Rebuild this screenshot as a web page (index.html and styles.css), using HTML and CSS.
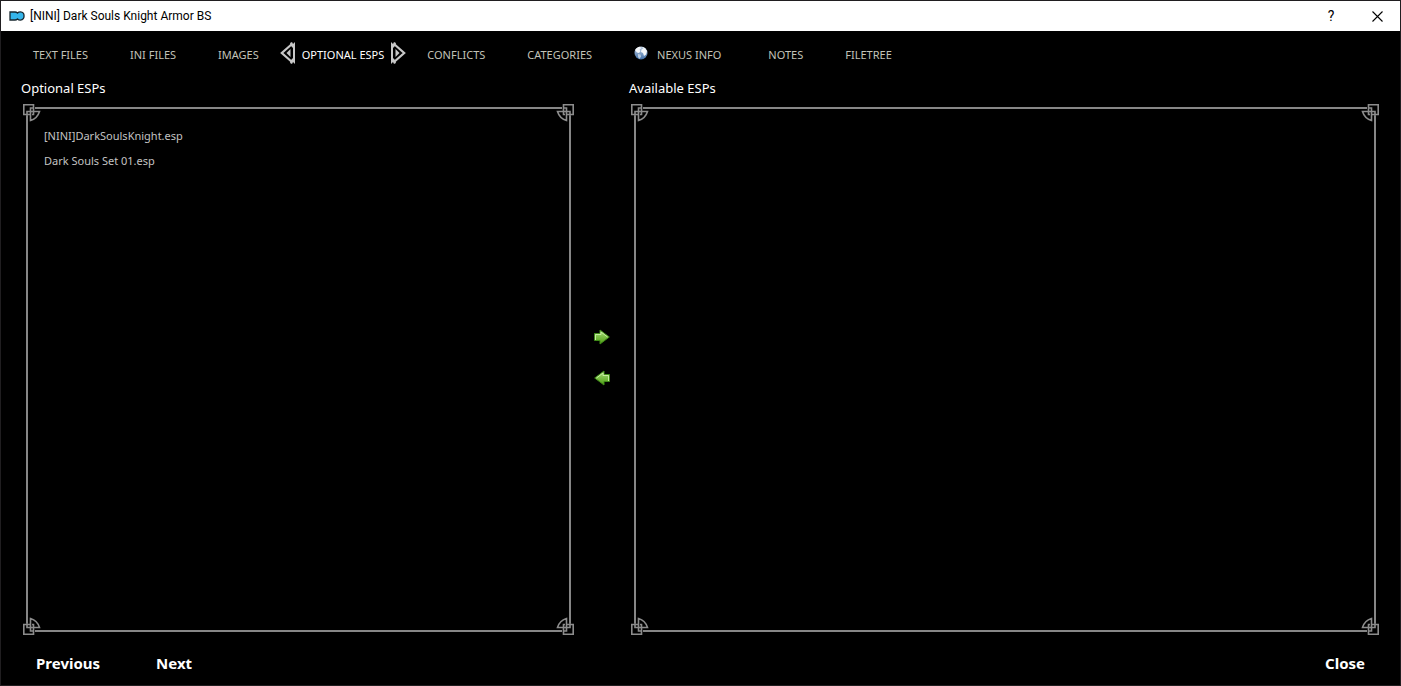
FILE: index.html
```html
<!DOCTYPE html>
<html lang="en">
<head>
  <meta charset="UTF-8" />
  <meta name="viewport" content="width=device-width, initial-scale=1.0" />
  <title>[NINI] Dark Souls Knight Armor BS</title>
  <link rel="stylesheet" href="styles.css">
</head>
<body>
  <svg class="defs" aria-hidden="true">
    <symbol id="corner" viewBox="0 0 18 18">
      <path d="M0 0h11v18H0zM11 0h7v11h-7z" fill="#000"/>
      <path d="M18 4H12M4 18V12" fill="none" stroke="#868686" stroke-width="2"/>
      <path d="M11 4H7.500v12.500c5-1.500 7.500-4 9-9H4V12M7 10.500H.800V.800h9.700v9.700H9" fill="none" stroke="#8c8c8c" stroke-width="1.600"/>
    </symbol>
    <symbol id="tab-mark" viewBox="0 0 16 22">
      <path d="M12 2L1.800 11 12 20" fill="none" stroke="#c8c8c8" stroke-width="2.200"/>
      <path d="M10 1l2-1 1 2 2-2v22l-2-2-1 2-2-1 1-3 2-2V6l-2-2zM10.500 7v8L6.500 11z" fill="#c8c8c8"/>
    </symbol>
    <linearGradient id="green" x1="0" y1="0" x2="0" y2="1">
      <stop offset="0" stop-color="#a9e07a"/>
      <stop offset="1" stop-color="#4d9d12"/>
    </linearGradient>
    <symbol id="arrow" viewBox="0 0 16 16">
      <path d="M.5 4.500h5.500V1L15.300 8 6 15v-3.500H.5z" fill="url(#green)" stroke="#3f8a18"/>
      <path d="M1.500 11V5.500H7V3L13.500 8" fill="none" stroke="#c5eda0"/>
    </symbol>
  </svg>

  <div class="window">
    <header class="titlebar">
      <svg class="app-icon" viewBox="0 0 16 10" aria-hidden="true">
        <path d="M1 1h5c1.500 0 2 .5 2.500 1C10 .5 13 .5 14.300 2.200c1 1.300 1 4.200 0 5.500C13 9.500 10 9.500 8.500 8 8 8.500 7.500 9 6 9H1z" fill="#35b5ea" stroke="#17272f" stroke-width="1.300"/>
      </svg>
      <h1>[NINI] Dark Souls Knight Armor BS</h1>
      <button type="button" class="title-button" aria-label="Help">?</button>
      <button type="button" class="title-button" aria-label="Close window">
        <svg class="cross" viewBox="0 0 11 11"><path d="M.5.5l10 10M10.500.5l-10 10" stroke="#000" stroke-width="1.100"/></svg>
      </button>
    </header>

    <nav class="tabs">
      <button type="button">TEXT FILES</button>
      <button type="button">INI FILES</button>
      <button type="button">IMAGES</button>
      <button type="button" class="active">
        <svg class="mark" aria-hidden="true"><use href="#tab-mark"/></svg>
        OPTIONAL ESPS
        <svg class="mark flip-x" aria-hidden="true"><use href="#tab-mark"/></svg>
      </button>
      <button type="button">CONFLICTS</button>
      <button type="button">CATEGORIES</button>
      <button type="button" class="with-icon">
        <svg class="globe" viewBox="0 0 14 14" aria-hidden="true">
          <defs>
            <linearGradient id="sea" x1="0" y1="0" x2="0" y2="1">
              <stop offset="0" stop-color="#c3d2e4"/>
              <stop offset="1" stop-color="#3f6ea8"/>
            </linearGradient>
          </defs>
          <circle cx="7" cy="7" r="6.500" fill="url(#sea)"/>
          <path d="M1 4c1-2 3-3.300 5-3.300l1 1.600-1.500 1.500 1 1.200-1.500 2L3 6.500zM8 1l3 1 2 3-1 3.500-2 1.500-1-3-2-1 .5-2.500 2-1z" fill="#f4f7fa"/>
          <path d="M4 8l2.500.5.5 2L5.500 13 4 11z" fill="#b9cbe0"/>
        </svg>
        NEXUS INFO
      </button>
      <button type="button">NOTES</button>
      <button type="button">FILETREE</button>
    </nav>

    <main class="panels">
      <section class="panel">
        <h2>Optional ESPs</h2>
        <div class="frame">
          <ul class="list">
            <li>[NINI]DarkSoulsKnight.esp</li>
            <li>Dark Souls Set 01.esp</li>
          </ul>
          <svg class="corner top left" aria-hidden="true"><use href="#corner"/></svg>
          <svg class="corner top right" aria-hidden="true"><use href="#corner"/></svg>
          <svg class="corner bottom left" aria-hidden="true"><use href="#corner"/></svg>
          <svg class="corner bottom right" aria-hidden="true"><use href="#corner"/></svg>
        </div>
      </section>

      <div class="movers">
        <button type="button" aria-label="Make available"><svg class="arrow"><use href="#arrow"/></svg></button>
        <button type="button" aria-label="Make optional"><svg class="arrow flip-x"><use href="#arrow"/></svg></button>
      </div>

      <section class="panel">
        <h2>Available ESPs</h2>
        <div class="frame">
          <ul class="list"></ul>
          <svg class="corner top left" aria-hidden="true"><use href="#corner"/></svg>
          <svg class="corner top right" aria-hidden="true"><use href="#corner"/></svg>
          <svg class="corner bottom left" aria-hidden="true"><use href="#corner"/></svg>
          <svg class="corner bottom right" aria-hidden="true"><use href="#corner"/></svg>
        </div>
      </section>
    </main>

    <footer class="actions">
      <button type="button">Previous</button>
      <button type="button">Next</button>
      <button type="button" class="close">Close</button>
    </footer>
  </div>
</body>
</html>
```

FILE: styles.css
```css
* {
  box-sizing: border-box;
}
body {
  margin: 0;
  background: #000;
  color: #fff;
  font-family: "Noto Sans", "Open Sans", sans-serif;
}
button {
  padding: 0;
  border: none;
  background: none;
  color: inherit;
  font: inherit;
  cursor: pointer;
}
svg {
  display: block;
  flex: none;
}
.defs {
  position: absolute;
  width: 0;
  height: 0;
}
.window {
  display: flex;
  flex-direction: column;
  min-height: 100vh;
  border: 1px solid #201e20;
}

/* title bar */
.titlebar {
  display: flex;
  align-items: center;
  height: 30px;
  padding-left: 8px;
  background: #fff;
  color: #000;
  font-family: Roboto, sans-serif;
}
.app-icon {
  width: 16px;
  height: 10px;
  margin-right: 5px;
}
.titlebar h1 {
  flex: 1;
  margin: 0;
  font-size: 12px;
  font-weight: normal;
}
.title-button {
  display: flex;
  align-items: center;
  justify-content: center;
  width: 46px;
  height: 28px;
  font-size: 14px;
}
.cross {
  width: 11px;
  height: 11px;
}

/* tabs */
.tabs {
  display: flex;
  height: 44px;
  margin-bottom: 4px;
  padding-left: 11px;
  color: #c3c3b8;
  font-size: 11px;
}
.tabs button {
  display: flex;
  align-items: center;
  padding: 3px 21px 0;
  white-space: nowrap;
}
.tabs .active {
  gap: 6px;
  padding: 3px 0 0;
  color: #fff;
}
.tabs .with-icon {
  gap: 9px;
  padding-right: 26px;
}
.mark {
  width: 16px;
  height: 22px;
  margin-bottom: 3px;
}
.globe {
  width: 14px;
  height: 14px;
  margin-bottom: 3px;
}
.flip-x {
  transform: scaleX(-1);
}

/* esp lists */
.panels {
  display: grid;
  grid-template-columns: minmax(0, 551fr) 57px minmax(0, 748fr);
  flex: 1;
  padding: 0 21px 0 22px;
}
.panel {
  display: flex;
  flex-direction: column;
}
.panel h2 {
  margin: 0 0 7px -2px;
  font-size: 13px;
  font-weight: normal;
  line-height: 18px;
}
.frame {
  position: relative;
  flex: 1;
  padding: 3px;
}
.list {
  height: 100%;
  margin: 0;
  padding: 14px 16px;
  border: 2px solid #868686;
  color: #c3c3c3;
  font-size: 11px;
  line-height: 25px;
  list-style: none;
}
.corner {
  position: absolute;
  width: 18px;
  height: 18px;
}
.top {
  top: 0;
}
.bottom {
  bottom: 0;
}
.left {
  left: 0;
}
.right {
  right: 0;
}
.top.right {
  transform: scaleX(-1);
}
.bottom.left {
  transform: scaleY(-1);
}
.bottom.right {
  transform: scale(-1);
}
.movers {
  display: flex;
  flex-direction: column;
  align-items: center;
  justify-content: center;
  gap: 25px;
  padding-right: 2px;
}
.arrow {
  width: 16px;
  height: 16px;
}

/* bottom buttons */
.actions {
  display: flex;
  height: 50px;
  padding: 5px 7px 0;
  font-size: 15px;
  font-weight: bold;
}
.actions button {
  padding: 0 28px;
}
.actions .close {
  margin-left: auto;
}
```
